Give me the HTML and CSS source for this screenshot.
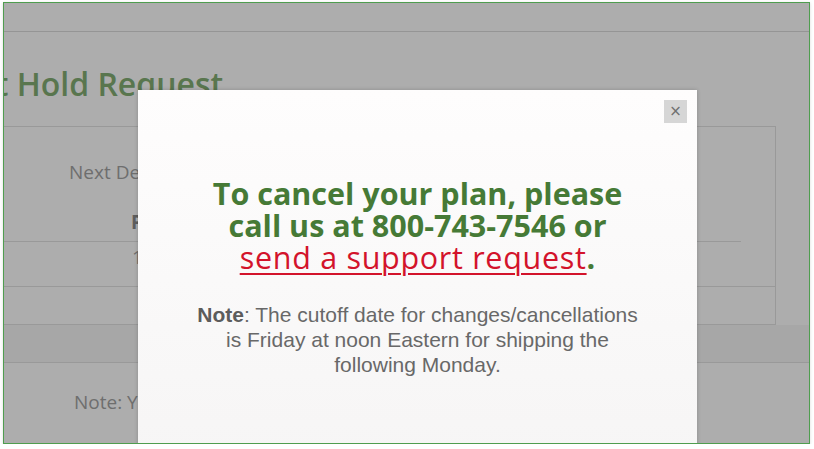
FILE: index.html
```html
<!DOCTYPE html>
<html lang="en">
<head>
  <meta charset="UTF-8">
  <meta name="viewport" content="width=device-width, initial-scale=1.0">
  <title>Edit Hold Request</title>
  <link rel="stylesheet" href="styles.css">
</head>
<body>

<div class="frame">
  <div class="page">
    <div class="topbar"></div>
    <h1 class="page-title">Edit Hold Request</h1>

    <div class="hold-box">
      <p class="next-date">Next Delivery Date: Monday</p>
      <table class="hold-table">
        <tr><th>Plan</th><th>Status</th></tr>
        <tr><td>1</td><td>Active</td></tr>
      </table>
      <div class="box-row"></div>
    </div>
    <div class="band"></div>
    <p class="page-note">Note: Your hold request will apply to upcoming deliveries.</p>
  </div>

  <div class="overlay"></div>

  <div class="modal">
    <button class="close">&times;</button>
    <h2 class="modal-title">
      To cancel your plan, please<br>
      call us at 800-743-7546 or<br>
      <a href="#">send a support request</a>.
    </h2>
    <p class="modal-note">
      <b>Note</b>: The cutoff date for changes/cancellations<br>
      is Friday at noon Eastern for shipping the<br>
      following Monday.
    </p>
  </div>
</div>

</body>
</html>
```

FILE: styles.css
```css
body {
  margin: 0;
  background: #ffffff;
  font-family: "Open Sans", sans-serif;
}

.frame {
  position: relative;
  margin: 2px 0 0 3px;
  width: 805px;
  height: 440px;
  border: 1px solid #4f9d4f;
  overflow: hidden;
  box-shadow: 0 1px 3px rgba(0, 0, 0, 0.15);
}

.page {
  background: #ffffff;
  height: 100%;
}

.topbar {
  height: 28px;
  border-bottom: 1px solid #dcdcdc;
}

.page-title {
  margin: 30px 0 0 -55px;
  font-size: 32px;
  font-weight: 600;
  color: #84ae74;
  white-space: nowrap;
}

.hold-box {
  margin: 21px 33px 0 -20px;
  border: 1px solid #e2e2e2;
}

.next-date {
  margin: 32px 0 0 84px;
  font-size: 19px;
  color: #a3a3a3;
  white-space: nowrap;
}

.hold-table {
  margin: 18px 0 0 0;
  width: 756px;
  border-collapse: collapse;
  font-size: 19px;
  color: #a3a3a3;
}

.hold-table th {
  text-align: left;
  padding: 6px 0 6px 146px;
  border-bottom: 1px solid #e2e2e2;
  color: #8a8a8a;
}

.hold-table td {
  text-align: left;
  padding: 2px 0 16px 147px;
}

.box-row {
  height: 37px;
  border-top: 1px solid #e2e2e2;
}

.band {
  height: 37px;
  background: #f7f7f7;
  border-bottom: 1px solid #e2e2e2;
}

.page-note {
  margin: 26px 0 0 70px;
  font-size: 19px;
  color: #a3a3a3;
  white-space: nowrap;
}

.overlay {
  position: absolute;
  inset: 0;
  background: rgba(0, 0, 0, 0.32);
}

.modal {
  position: absolute;
  left: 134px;
  top: 87px;
  width: 559px;
  height: 380px;
  background: linear-gradient(to bottom, #fefdfd, #f6f5f5);
  box-shadow: 0 0 4px rgba(0, 0, 0, 0.2);
  text-align: center;
  padding-top: 87px;
  box-sizing: border-box;
}

.close {
  position: absolute;
  top: 10px;
  right: 10px;
  width: 23px;
  height: 23px;
  padding: 0;
  border: none;
  background: #d6d6d6;
  color: #6f6f6f;
  font-family: "DejaVu Sans", sans-serif;
  font-size: 15px;
  line-height: 23px;
}

.modal-title {
  margin: 0;
  font-size: 30.5px;
  line-height: 32px;
  font-weight: 700;
  color: #467a36;
}

.modal-title a {
  color: #d3132b;
  font-weight: 500;
  letter-spacing: 0.7px;
  text-decoration: underline;
  text-decoration-thickness: 2px;
  text-underline-offset: 4px;
}

.modal-note {
  margin: 29px 0 0 0;
  font-family: "Liberation Sans", Arial, sans-serif;
  font-size: 21px;
  line-height: 25px;
  color: #686868;
}

.modal-note b {
  color: #5c5c5c;
}
```
